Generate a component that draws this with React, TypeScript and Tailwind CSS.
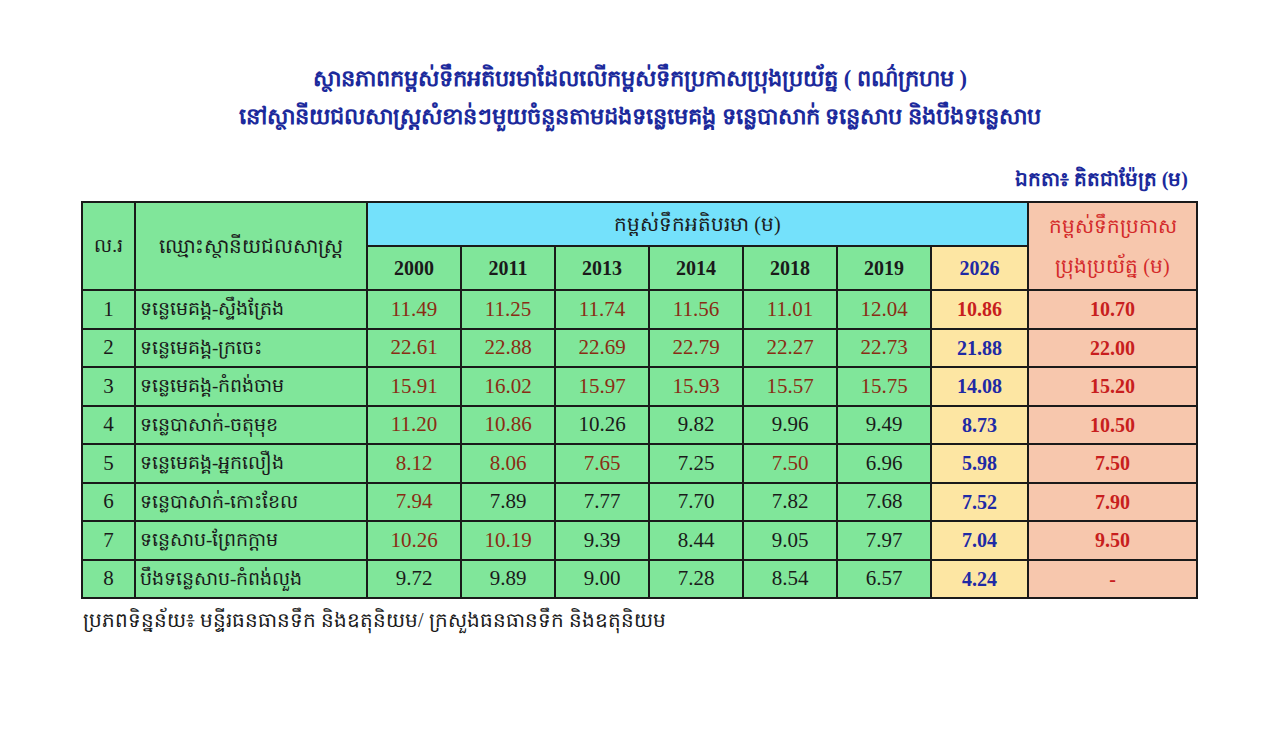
import React from "react"

type Row = {
    no: number
    name: string
    values: { v: string; hot: boolean }[]
    y2026: { v: string; hot: boolean }
    alert: string
}

const years = ["2000", "2011", "2013", "2014", "2018", "2019"]

const h = (v: string) => ({ v, hot: true })
const n = (v: string) => ({ v, hot: false })

const rows: Row[] = [
    { no: 1, name: "ទន្លេមេគង្គ-ស្ទឹងត្រែង", values: [h("11.49"), h("11.25"), h("11.74"), h("11.56"), h("11.01"), h("12.04")], y2026: h("10.86"), alert: "10.70" },
    { no: 2, name: "ទន្លេមេគង្គ-ក្រចេះ", values: [h("22.61"), h("22.88"), h("22.69"), h("22.79"), h("22.27"), h("22.73")], y2026: n("21.88"), alert: "22.00" },
    { no: 3, name: "ទន្លេមេគង្គ-កំពង់ចាម", values: [h("15.91"), h("16.02"), h("15.97"), h("15.93"), h("15.57"), h("15.75")], y2026: n("14.08"), alert: "15.20" },
    { no: 4, name: "ទន្លេបាសាក់-ចតុមុខ", values: [h("11.20"), h("10.86"), n("10.26"), n("9.82"), n("9.96"), n("9.49")], y2026: n("8.73"), alert: "10.50" },
    { no: 5, name: "ទន្លេមេគង្គ-អ្នកលឿង", values: [h("8.12"), h("8.06"), h("7.65"), n("7.25"), h("7.50"), n("6.96")], y2026: n("5.98"), alert: "7.50" },
    { no: 6, name: "ទន្លេបាសាក់-កោះខែល", values: [h("7.94"), n("7.89"), n("7.77"), n("7.70"), n("7.82"), n("7.68")], y2026: n("7.52"), alert: "7.90" },
    { no: 7, name: "ទន្លេសាប-ព្រែកក្ដាម", values: [h("10.26"), h("10.19"), n("9.39"), n("8.44"), n("9.05"), n("7.97")], y2026: n("7.04"), alert: "9.50" },
    { no: 8, name: "បឹងទន្លេសាប-កំពង់លួង", values: [n("9.72"), n("9.89"), n("9.00"), n("7.28"), n("8.54"), n("6.57")], y2026: n("4.24"), alert: "-" },
]

const khmer = "font-['Liberation_Serif','Noto_Sans',sans-serif]"

export default function App() {
    return (
        <div className={`min-h-[731px] w-[1280px] bg-white ${khmer}`}>
            {/* Title */}
            <div className="flex flex-col items-center pt-[60px] text-[#1c2a9c]">
                <h1 className="text-[22.5px] font-bold leading-[38px]">
                    ស្ថានភាពកម្ពស់ទឹកអតិបរមាដែលលើកម្ពស់ទឹកប្រកាសប្រុងប្រយ័ត្ន ( ពណ៌ក្រហម )
                </h1>
                <h2 className="text-[22.5px] font-bold leading-[38px]">
                    នៅស្ថានីយជលសាស្ត្រសំខាន់ៗមួយចំនួនតាមដងទន្លេមេគង្គ ទន្លេបាសាក់ ទន្លេសាប និងបឹងទន្លេសាប
                </h2>
            </div>

            {/* Unit */}
            <div className="mt-[28px] flex justify-end pr-[92px] text-[20px] font-bold leading-[30px] text-[#1c2a9c]">
                ឯកតា៖ គិតជាម៉ែត្រ (ម)
            </div>

            {/* Table */}
            <div className="mt-[7px] pl-[81px]">
                <table className="w-[1115px] table-fixed border-collapse border-2 border-[#1a1a1a] text-center">
                    <colgroup>
                        <col className="w-[53px]" />
                        <col className="w-[232px]" />
                        {years.map((y) => (
                            <col key={y} className="w-[94px]" />
                        ))}
                        <col className="w-[97px]" />
                        <col className="w-[169px]" />
                    </colgroup>
                    <thead>
                        <tr className="h-[44px]">
                            <th rowSpan={2} className="border-2 border-[#1a1a1a] bg-[#80e69a] text-[19px] font-normal text-[#1a1a1a]">
                                ល.រ
                            </th>
                            <th rowSpan={2} className="border-2 border-[#1a1a1a] bg-[#80e69a] align-middle text-[20px] font-normal text-[#1a1a1a]">
                                ឈ្មោះស្ថានីយជលសាស្ត្រ
                            </th>
                            <th colSpan={7} className="border-2 border-[#1a1a1a] bg-[#74e1fb] text-[20px] font-normal text-[#1a1a1a]">
                                កម្ពស់ទឹកអតិបរមា (ម)
                            </th>
                            <th rowSpan={2} className="border-2 border-[#1a1a1a] bg-[#f7c7ad] text-[20px] font-normal leading-[40px] text-[#d42a2a]">
                                កម្ពស់ទឹកប្រកាស
                                <br />
                                ប្រុងប្រយ័ត្ន (ម)
                            </th>
                        </tr>
                        <tr className="h-[44px]">
                            {years.map((y) => (
                                <th key={y} className="border-2 border-[#1a1a1a] bg-[#80e69a] text-[20px] font-bold text-[#1a1a1a]">
                                    {y}
                                </th>
                            ))}
                            <th className="border-2 border-[#1a1a1a] bg-[#fde6a3] text-[20px] font-bold text-[#1f2aa5]">2026</th>
                        </tr>
                    </thead>
                    <tbody>
                        {rows.map((r) => (
                            <tr key={r.no} className="h-[38.5px] text-[21px]">
                                <td className="border-2 border-[#1a1a1a] bg-[#80e69a] text-[#1a1a1a]">{r.no}</td>
                                <td className="border-2 border-[#1a1a1a] bg-[#80e69a] px-[4px] text-left text-[19px] text-[#1a1a1a]">
                                    {r.name}
                                </td>
                                {r.values.map((c, i) => (
                                    <td
                                        key={i}
                                        className={`border-2 border-[#1a1a1a] bg-[#80e69a] ${
                                            c.hot ? "text-[#8a2c14]" : "text-[#1a1a1a]"
                                        }`}
                                    >
                                        {c.v}
                                    </td>
                                ))}
                                <td
                                    className={`border-2 border-[#1a1a1a] bg-[#fde6a3] text-[20px] font-bold ${
                                        r.y2026.hot ? "text-[#c81e1e]" : "text-[#1f2aa5]"
                                    }`}
                                >
                                    {r.y2026.v}
                                </td>
                                <td className="border-2 border-[#1a1a1a] bg-[#f7c7ad] text-[20px] font-bold text-[#c81e1e]">{r.alert}</td>
                            </tr>
                        ))}
                    </tbody>
                </table>
            </div>

            {/* Source */}
            <p className="pl-[83px] pt-[4px] text-[20px] leading-[34px] text-[#1a1a1a]">
                ប្រភពទិន្នន័យ៖ មន្ទីរធនធានទឹក និងឧតុនិយម/ ក្រសួងធនធានទឹក និងឧតុនិយម
            </p>
        </div>
    )
}
